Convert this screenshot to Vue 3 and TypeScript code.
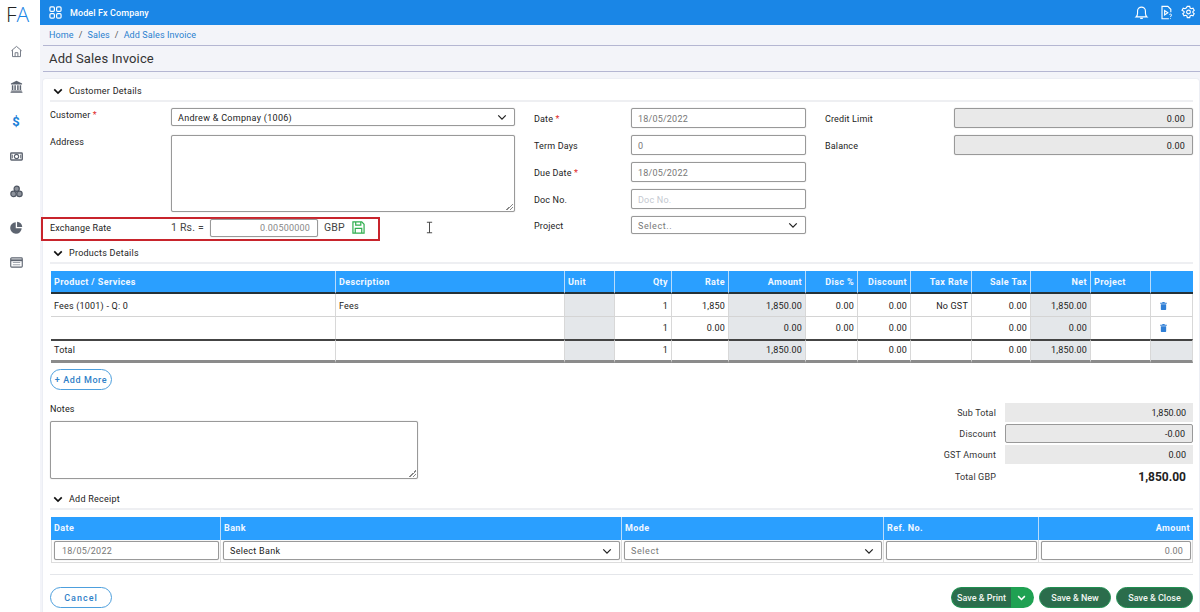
<script setup lang="ts">
interface Column {
  label: string
  width: number
  right?: boolean
  shaded?: boolean
}

const productCols: Column[] = [
  { label: 'Product / Services', width: 285 },
  { label: 'Description', width: 229 },
  { label: 'Unit', width: 50, shaded: true },
  { label: 'Qty', width: 57, right: true },
  { label: 'Rate', width: 57, right: true },
  { label: 'Amount', width: 77, right: true, shaded: true },
  { label: 'Disc %', width: 52, right: true },
  { label: 'Discount', width: 53, right: true },
  { label: 'Tax Rate', width: 61, right: true },
  { label: 'Sale Tax', width: 59, right: true },
  { label: 'Net', width: 60, right: true, shaded: true },
  { label: 'Project', width: 60 },
]

const productRows = [
  ['Fees (1001) - Q: 0', 'Fees', '', '1', '1,850', '1,850.00', '0.00', '0.00', 'No GST', '0.00', '1,850.00', ''],
  ['', '', '', '1', '0.00', '0.00', '0.00', '0.00', '', '0.00', '0.00', ''],
]
const totalRow = ['Total', '', '', '1', '', '1,850.00', '', '0.00', '', '0.00', '1,850.00', '']

const navItems = ['home', 'bank', 'dollar', 'money', 'coins', 'pie', 'panel']
const dateFields = [
  { label: 'Date', required: true, value: '18/05/2022' },
  { label: 'Term Days', required: false, value: '0' },
  { label: 'Due Date', required: true, value: '18/05/2022' },
]
</script>

<template>
  <div class="shell">
    <aside class="sidebar">
      <div class="logo"><span class="logo-f">F</span><span class="logo-a">A</span></div>
      <nav class="nav">
        <div v-for="item in navItems" :key="item" class="nav-item">
          <svg v-if="item === 'home'" viewBox="0 0 14 14" class="nav-icon" fill="none" stroke="#6d7480" stroke-width="1">
            <path d="M1.500 6.200 7 1.500l5.500 4.700M2.700 5.500v7h8.600v-7M5.500 12.500V8.300h3v4.200" />
          </svg>
          <svg v-else-if="item === 'bank'" viewBox="0 0 14 14" class="nav-icon" fill="#5d6470">
            <path d="M7 .8 13 3.800v1H1v-1zM2 5.600h1.600v5.200H2zM4.700 5.600h1.600v5.200H4.700zM7.700 5.600h1.600v5.200H7.700zM10.400 5.600H12v5.200h-1.600zM1.300 11.400h11.400v1H1.300zM.6 12.600h12.800v1H.6z" />
          </svg>
          <span v-else-if="item === 'dollar'" class="dollar">$</span>
          <svg v-else-if="item === 'money'" viewBox="0 0 14 14" class="nav-icon" fill="none" stroke="#5d6470" stroke-width="1.500">
            <rect x=".8" y="3.200" width="12.400" height="7.600" rx=".8" />
            <circle cx="7" cy="7" r="2.300" stroke-width="1.200" />
            <path d="M2.500 5v4M11.500 5v4" stroke-width="1" />
          </svg>
          <svg v-else-if="item === 'coins'" viewBox="0 0 14 14" class="nav-icon" fill="#8d929b" stroke="#4f5662" stroke-width="1.300">
            <circle cx="7.200" cy="4" r="2.800" />
            <circle cx="3.800" cy="9.600" r="2.900" />
            <circle cx="10.200" cy="9.600" r="2.900" />
          </svg>
          <svg v-else-if="item === 'pie'" viewBox="0 0 14 14" class="nav-icon" fill="#5d6470">
            <path d="M6.200 1.400v6.400h6.400A6.200 6.200 0 1 1 6.200 1.400z" />
            <path d="M7.600.8a5.800 5.800 0 0 1 5.600 5.600H7.600z" />
          </svg>
          <svg v-else viewBox="0 0 14 14" class="nav-icon" fill="none" stroke="#5d6470" stroke-width="1.200">
            <rect x=".8" y="2" width="12.400" height="10" rx="1" />
            <path d="M.8 4.600h12.400" stroke-width="2" />
            <path d="M3 7h8M3 9.400h8" stroke="#a0a5ad" />
          </svg>
        </div>
      </nav>
    </aside>

    <div class="main">
      <header class="topbar">
        <svg viewBox="0 0 14 14" class="apps" fill="none" stroke="#fff" stroke-width="1.300">
          <rect x="1" y="1" width="4.800" height="4.800" rx="1.200" />
          <rect x="8.200" y="1" width="4.800" height="4.800" rx="1.200" />
          <rect x="1" y="8.200" width="4.800" height="4.800" rx="1.200" />
          <rect x="8.200" y="8.200" width="4.800" height="4.800" rx="1.200" />
        </svg>
        <span class="company">Model Fx Company</span>
        <div class="top-icons">
          <svg viewBox="0 0 16 16" class="top-icon bell" fill="none" stroke="#fff" stroke-width="1.200">
            <path d="M2.200 12.600c1.200-1 1.600-2 1.600-3.800V6.400a4.200 4.200 0 0 1 8.400 0v2.400c0 1.800.4 2.800 1.600 3.800z" />
            <path d="M6.600 14.200h2.800" stroke-width="1.400" />
          </svg>
          <svg viewBox="0 0 16 16" class="top-icon" fill="none" stroke="#fff" stroke-width="1.200">
            <path d="M10.500 14.600H3.200V1.400h6.200l3.200 3.200v3" />
            <path d="M6 6v4.600l3.400-2.300z" />
            <path d="M11 10.400c.3-1 2.300-1 2.400.3 0 1-1.200 1-1.200 2.100M12.200 14v.8" stroke-width="1" />
          </svg>
          <svg viewBox="0 0 16 16" class="top-icon" fill="none" stroke="#fff" stroke-width="1.200">
            <path d="M6.700 1.500h2.600l.4 1.800 1.300.7 1.800-.6 1.300 2.300-1.400 1.200v1.200l1.400 1.200-1.300 2.300-1.800-.6-1.300.7-.4 1.800H6.700l-.4-1.800-1.300-.7-1.800.6-1.300-2.300 1.400-1.200V6.900L1.100 5.700l1.300-2.300 1.800.6 1.300-.7z" />
            <circle cx="8" cy="7.500" r="2" />
          </svg>
        </div>
      </header>

      <div class="crumbs">
        <span class="crumb">Home</span><span class="sep">/</span>
        <span class="crumb">Sales</span><span class="sep">/</span>
        <span class="crumb">Add Sales Invoice</span>
      </div>
      <h1 class="title">Add Sales Invoice</h1>

      <section class="card">
        <div class="section-head">
          <svg viewBox="0 0 12 8" class="head-chev" fill="none" stroke="#111" stroke-width="2"><path d="M1.500 1.500 6 6l4.500-4.500" /></svg>
          <span>Customer Details</span>
        </div>

        <div class="form">
          <div class="col-left">
            <div class="field field-left">
              <label class="label label-top">Customer <i class="req">*</i></label>
              <div class="input select dark">
                <span>Andrew &amp; Compnay (1006)</span>
                <svg viewBox="0 0 12 8" class="chev" fill="none" stroke="#222" stroke-width="1.500"><path d="M1.500 1.500 6 6l4.500-4.500" /></svg>
              </div>
            </div>
            <div class="field field-left">
              <label class="label label-top">Address</label>
              <div class="textarea address"><span class="grip"></span></div>
            </div>
            <div class="exchange">
              <span class="label exchange-label">Exchange Rate</span>
              <span class="rate-text">1 Rs. =</span>
              <div class="input rate">0.00500000</div>
              <span class="rate-text gbp">GBP</span>
              <svg viewBox="0 0 14 14" class="save" fill="none" stroke="#2fae4e" stroke-width="1.300">
                <path d="M1 1h9.500L13 3.500V13H1z" />
                <path d="M4 1v3.500h5.500V1M3.500 13V8h7v5" />
              </svg>
              <svg viewBox="0 0 8 14" class="ibeam" fill="none" stroke="#333" stroke-width="1"><path d="M1 1h6M1 13h6M4 1v12" /></svg>
            </div>
          </div>

          <div class="col-mid">
            <div v-for="f in dateFields" :key="f.label" class="field field-mid">
              <label class="label">{{ f.label }} <i v-if="f.required" class="req">*</i></label>
              <div class="input muted">{{ f.value }}</div>
            </div>
            <div class="field field-mid">
              <label class="label">Doc No.</label>
              <div class="input placeholder">Doc No.</div>
            </div>
            <div class="field field-mid short">
              <label class="label">Project</label>
              <div class="input select muted spaced">
                <span>Select..</span>
                <svg viewBox="0 0 12 8" class="chev" fill="none" stroke="#222" stroke-width="1.500"><path d="M1.500 1.500 6 6l4.500-4.500" /></svg>
              </div>
            </div>
          </div>

          <div class="col-right">
            <div class="field field-right">
              <label class="label">Credit Limit</label>
              <div class="input filled">0.00</div>
            </div>
            <div class="field field-right">
              <label class="label">Balance</label>
              <div class="input filled">0.00</div>
            </div>
          </div>
        </div>

        <div class="section-head">
          <svg viewBox="0 0 12 8" class="head-chev" fill="none" stroke="#111" stroke-width="2"><path d="M1.500 1.500 6 6l4.500-4.500" /></svg>
          <span>Products Details</span>
        </div>

        <table class="grid products">
          <colgroup>
            <col v-for="c in productCols" :key="c.label" :style="{ width: c.width + 'px' }" />
            <col />
          </colgroup>
          <thead>
            <tr>
              <th v-for="c in productCols" :key="c.label" :class="{ right: c.right }">{{ c.label }}</th>
              <th></th>
            </tr>
          </thead>
          <tbody>
            <tr v-for="(row, r) in productRows" :key="r">
              <td v-for="(cell, i) in row" :key="i" :class="{ right: productCols[i].right, shaded: productCols[i].shaded }">{{ cell }}</td>
              <td class="trash-cell">
                <svg viewBox="0 0 10 12" class="trash" fill="#2f7fd6">
                  <path d="M3.500 0h3l.5 1H10v1.500H0V1h3zM1 3.500h8V11a1 1 0 0 1-1 1H2a1 1 0 0 1-1-1z" />
                </svg>
              </td>
            </tr>
            <tr class="total">
              <td v-for="(cell, i) in totalRow" :key="i" :class="{ right: productCols[i].right, shaded: productCols[i].shaded }">{{ cell }}</td>
              <td class="shaded"></td>
            </tr>
          </tbody>
        </table>

        <button class="pill add-more">+ Add More</button>

        <div class="summary">
          <div class="notes">
            <label class="label">Notes</label>
            <div class="textarea notes-box"><span class="grip"></span></div>
          </div>
          <div class="totals">
            <span class="total-label">Sub Total</span>
            <div class="total-value">1,850.00</div>
            <span class="total-label">Discount</span>
            <div class="total-value boxed">-0.00</div>
            <span class="total-label">GST Amount</span>
            <div class="total-value">0.00</div>
            <span class="total-label">Total GBP</span>
            <div class="total-value grand">1,850.00</div>
          </div>
        </div>

        <div class="section-head receipt-head">
          <svg viewBox="0 0 12 8" class="head-chev" fill="none" stroke="#111" stroke-width="2"><path d="M1.500 1.500 6 6l4.500-4.500" /></svg>
          <span>Add Receipt</span>
        </div>

        <table class="grid receipt">
          <colgroup>
            <col style="width: 170px" />
            <col style="width: 401px" />
            <col style="width: 262px" />
            <col style="width: 155px" />
            <col />
          </colgroup>
          <thead>
            <tr>
              <th>Date</th>
              <th>Bank</th>
              <th>Mode</th>
              <th>Ref. No.</th>
              <th class="right">Amount</th>
            </tr>
          </thead>
          <tbody>
            <tr>
              <td><div class="input muted date-in">18/05/2022</div></td>
              <td>
                <div class="input select dark">
                  <span>Select Bank</span>
                  <svg viewBox="0 0 12 8" class="chev" fill="none" stroke="#222" stroke-width="1.500"><path d="M1.500 1.500 6 6l4.500-4.500" /></svg>
                </div>
              </td>
              <td>
                <div class="input select muted spaced">
                  <span>Select</span>
                  <svg viewBox="0 0 12 8" class="chev" fill="none" stroke="#222" stroke-width="1.500"><path d="M1.500 1.500 6 6l4.500-4.500" /></svg>
                </div>
              </td>
              <td><div class="input"></div></td>
              <td><div class="input muted end">0.00</div></td>
            </tr>
          </tbody>
        </table>

        <footer class="actions">
          <button class="pill cancel">Cancel</button>
          <div class="save-group">
            <div class="split">
              <button class="btn-green split-main">Save &amp; Print</button>
              <button class="split-toggle" aria-label="More">
                <svg viewBox="0 0 12 8" fill="none" stroke="#fff" stroke-width="2"><path d="M1.500 1.500 6 6l4.500-4.500" /></svg>
              </button>
            </div>
            <button class="btn-green new">Save &amp; New</button>
            <button class="btn-green close">Save &amp; Close</button>
          </div>
        </footer>
      </section>
    </div>
  </div>
</template>

<style scoped>
.shell {
  display: flex;
  width: 1200px;
  height: 612px;
  overflow: hidden;
  background: #fff;
  font-family: Roboto, 'Liberation Sans', sans-serif;
  font-size: 9px;
  color: #222;
}

.sidebar {
  width: 40px;
  flex: none;
}

.logo {
  height: 30px;
  padding-left: 6px;
  font-size: 21px;
  font-weight: 300;
  line-height: 29px;
  font-family: 'Open Sans', Roboto, sans-serif;
}

.logo-f {
  color: #222;
}

.logo-a {
  color: #1a86e6;
}

.nav {
  padding-top: 4px;
}

.nav-item {
  display: flex;
  align-items: center;
  justify-content: center;
  width: 32px;
  height: 35.1px;
}

.nav-icon {
  width: 13px;
  height: 13px;
}

.dollar {
  color: #1a7fd8;
  font-size: 13px;
  font-weight: 700;
}

.main {
  flex: 1;
  min-width: 0;
  background: #f3f4f9;
}

.topbar {
  display: flex;
  align-items: center;
  height: 25px;
  padding: 0 4px 0 9px;
  background: #1a86e6;
  color: #fff;
}

.apps {
  width: 13px;
  height: 13px;
}

.company {
  margin-left: 8px;
  font-size: 9px;
  font-weight: 500;
  letter-spacing: 0.1px;
}

.top-icons {
  display: flex;
  gap: 7px;
  margin-left: auto;
}

.top-icon {
  width: 15px;
  height: 15px;
}

.bell {
  margin-right: 3px;
}

.crumbs {
  display: flex;
  align-items: center;
  height: 20px;
  margin-left: 3px;
  padding-left: 6px;
  border-bottom: 1px solid #b4b6d2;
  letter-spacing: 0.1px;
}

.crumb {
  color: #2a80cf;
}

.sep {
  margin: 0 5px;
  color: #555;
}

.title {
  height: 25px;
  margin: 0 0 0 3px;
  padding-left: 6px;
  border-bottom: 1px solid #b4b6d2;
  font-size: 13px;
  font-weight: 400;
  line-height: 26px;
  letter-spacing: 0.15px;
  color: #333;
}

.card {
  height: 560px;
  margin: 7px 1px 0 3px;
  padding: 0 6px 0 7px;
  border-radius: 3px;
  box-shadow: 0 0 0 1px #eceef4;
  background: #fff;
}

.section-head {
  display: flex;
  align-items: center;
  box-sizing: border-box;
  height: 23px;
  padding: 3px 0 0 3px;
  border-bottom: 2px solid #eeeff2;
  letter-spacing: 0.25px;
}

.head-chev {
  width: 10px;
  height: 7px;
  margin-right: 6px;
}

.form {
  display: grid;
  grid-template-columns: 465px 272px 368px;
  column-gap: 19px;
  margin-top: 6px;
}

.field {
  display: grid;
  align-items: center;
}

.field-left {
  grid-template-columns: 121px 344px;
  align-items: start;
  margin-bottom: 9px;
}

.field-mid {
  grid-template-columns: 97px 175px;
  height: 20px;
  margin-bottom: 7px;
}

.field-mid.short {
  height: 18px;
  margin-bottom: 0;
}

.field-right {
  grid-template-columns: 129px 239px;
  height: 20px;
  margin-bottom: 7px;
}

.label {
  padding-top: 1px;
  color: #222;
  letter-spacing: 0.15px;
}

.label-top {
  line-height: 13px;
}

.req {
  color: #e02a2a;
  font-style: normal;
}

.input {
  display: flex;
  align-items: center;
  box-sizing: border-box;
  height: 100%;
  min-height: 18px;
  padding: 1px 7px 0 6px;
  border: 1px solid #999;
  border-radius: 2px;
  box-shadow: 0 0 1px #aaa;
  background: #fff;
  letter-spacing: 0.2px;
  white-space: nowrap;
}

.select {
  justify-content: space-between;
}

.dark {
  color: #222;
  letter-spacing: 0.3px;
}

.muted {
  color: #777;
}

.spaced {
  letter-spacing: 0.6px;
}

.placeholder {
  color: #c4c8d0;
}

.filled {
  justify-content: flex-end;
  background: #e9e9e9;
  color: #222;
}

.chev {
  width: 10px;
  height: 7px;
}

.textarea {
  position: relative;
  box-sizing: border-box;
  border: 1px solid #999;
  border-radius: 2px;
  box-shadow: 0 0 1px #aaa;
  background: #fff;
}

.address {
  height: 77px;
}

.grip {
  position: absolute;
  right: 1px;
  bottom: 1px;
  width: 7px;
  height: 7px;
  background: linear-gradient(135deg, transparent 50%, #888 50%, #888 60%, transparent 60%, transparent 75%, #888 75%, #888 85%, transparent 85%);
}

.exchange {
  position: relative;
  display: flex;
  align-items: center;
  box-sizing: border-box;
  width: 339px;
  height: 24px;
  margin: -4px 0 0 -9px;
  padding: 0 0 3px 7px;
  border: 2px solid #c8242c;
}

.exchange-label {
  width: 121px;
  margin-bottom: 1px;
}

.rate-text {
  font-size: 10.5px;
  color: #444;
  letter-spacing: 0.2px;
}

.rate {
  justify-content: flex-end;
  width: 108px;
  min-height: 18px;
  height: 18px;
  margin-left: 6px;
  padding: 0 7px 0 0;
  color: #888;
}

.gbp {
  margin-left: 6px;
}

.save {
  width: 13px;
  height: 13px;
  margin-left: 7px;
}

.ibeam {
  position: absolute;
  top: 2px;
  left: 383px;
  width: 7px;
  height: 13px;
}

.grid {
  width: 1142px;
  margin: 7px 0 0 1px;
  border-collapse: separate;
  border-spacing: 0;
  table-layout: fixed;
}

.grid th {
  box-sizing: border-box;
  height: 23px;
  padding: 0 3px;
  border-right: 1px solid #b9dcfb;
  background: #2a9fff;
  color: #f1f8ff;
  font-size: 9px;
  font-weight: 700;
  letter-spacing: 0.4px;
  text-align: left;
}

.grid th:last-child {
  border-right: 0;
}

.grid td {
  box-sizing: border-box;
  padding: 0 3px;
  border-right: 1px solid #d8d8d8;
  color: #222;
  letter-spacing: 0.2px;
  white-space: nowrap;
}

.grid .right {
  text-align: right;
}

.products th {
  border-bottom: 2px solid #263238;
}

.products td {
  height: 23px;
  padding-top: 1px;
  border-bottom: 1px solid #d4d4d4;
}

.products .shaded {
  background: #e4e7ea;
}

.products .total td {
  height: 24px;
  padding-top: 0;
  padding-bottom: 1px;
  border-top: 2px solid #444;
  border-bottom: 3px solid #8b8b8b;
}

.products tr:nth-child(2) td {
  height: 22px;
  padding-top: 0;
  border-bottom: 0;
}

.trash-cell {
  text-align: left;
  padding-left: 8px !important;
}

.trash {
  display: block;
  width: 7px;
  height: 8px;
  margin-left: 1px;
}

.pill {
  box-sizing: border-box;
  width: 62px;
  height: 21px;
  padding: 0;
  border: 1px solid #4d9fdd;
  border-radius: 11px;
  background: #fff;
  color: #2f7fc8;
  font: 500 9px Roboto, sans-serif;
  letter-spacing: 0.6px;
}

.add-more {
  display: block;
  margin-top: 6px;
}

.summary {
  display: flex;
  justify-content: space-between;
  margin-top: 13px;
}

.notes {
  display: flex;
  flex-direction: column;
}

.notes .label {
  height: 18px;
  box-sizing: border-box;
  line-height: 11px;
}

.notes-box {
  width: 368px;
  height: 58px;
}

.totals {
  display: grid;
  grid-template-columns: 70px 188px;
  grid-template-rows: 19px 19px 19px 22px;
  column-gap: 9px;
  row-gap: 2px;
  align-items: center;
}

.total-label {
  text-align: right;
  color: #333;
  letter-spacing: 0.15px;
}

.total-value {
  display: flex;
  align-items: center;
  justify-content: flex-end;
  box-sizing: border-box;
  height: 100%;
  padding-right: 7px;
  background: #e9e9e9;
}

.boxed {
  border: 1px solid #999;
  border-radius: 2px;
}

.grand {
  background: none;
  font-size: 12px;
  font-weight: 700;
}

.receipt-head {
  margin-top: -1px;
}

.receipt th {
  padding-bottom: 1px;
}

.receipt td {
  height: 23px;
  padding: 1px 1px 2px 2px;
  border-right: 1px solid #dcdcdc;
  border-bottom: 1px solid #dcdcdc;
}

.receipt td:first-child {
  border-left: 1px solid #dcdcdc;
}

.receipt .input {
  height: 19px;
}

.date-in {
  padding-left: 7px;
}

.end {
  justify-content: flex-end;
}

.actions {
  display: flex;
  align-items: flex-start;
  justify-content: space-between;
  box-sizing: border-box;
  height: 36px;
  margin-top: 11px;
  padding-top: 12px;
  border-top: 1px solid #e4e6ea;
}

.cancel {
  letter-spacing: 1px;
}

.save-group {
  display: flex;
  gap: 5px;
}

.btn-green {
  box-sizing: border-box;
  height: 21px;
  padding: 0;
  border: 1px solid #1f8f50;
  border-radius: 11px;
  background: #2b6d4c;
  color: #f1f6f2;
  font: 500 9px Roboto, sans-serif;
  letter-spacing: 0;
}

.new {
  width: 72px;
}

.close {
  width: 77px;
}

.split {
  display: flex;
  width: 83px;
}

.split-main {
  width: 60px;
  border-radius: 11px 0 0 11px;
  border-right: 0;
}

.split-toggle {
  display: flex;
  align-items: center;
  justify-content: center;
  width: 23px;
  height: 21px;
  padding: 0 2px 0 0;
  border: 0;
  border-radius: 0 11px 11px 0;
  background: #1fa152;
}

.split-toggle svg {
  width: 9px;
  height: 6px;
}
</style>

<style>
html,
body {
  margin: 0;
  overflow: hidden;
}
</style>
